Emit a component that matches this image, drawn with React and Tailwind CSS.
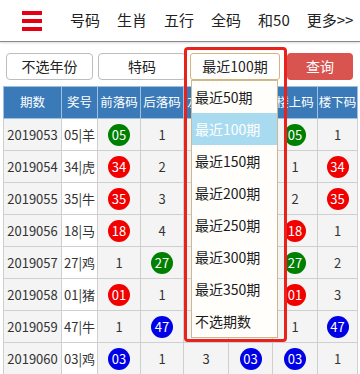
import React from 'react';

const font = { fontFamily: '"Noto Sans CJK SC", "Noto Sans", sans-serif' };

const navItems = ['号码', '生肖', '五行', '全码', '和50', '更多>>'];

const periods = ['最近50期', '最近100期', '最近150期', '最近200期', '最近250期', '最近300期', '最近350期', '不选期数'];

const ballColor = {
    g: 'bg-[#008000]',
    r: 'bg-[#f20000]',
    b: 'bg-[#0000e6]',
};

// each cell: plain text, or [number, colour]
const rows = [
    ['2019053', '05|羊', ['05', 'g'], '1', '2', '1', ['05', 'g'], '1'],
    ['2019054', '34|虎', ['34', 'r'], '2', '1', '3', '1', ['34', 'r']],
    ['2019055', '35|牛', ['35', 'r'], '3', '4', '1', '2', ['35', 'r']],
    ['2019056', '18|马', ['18', 'r'], '4', '2', '1', ['18', 'r'], '1'],
    ['2019057', '27|鸡', '1', ['27', 'g'], '3', '2', ['27', 'g'], '2'],
    ['2019058', '01|猪', ['01', 'r'], '1', '1', '4', ['01', 'r'], '3'],
    ['2019059', '47|牛', '1', ['47', 'b'], '2', '1', '1', ['47', 'b']],
    ['2019060', '03|鸡', ['03', 'b'], '1', '3', ['03', 'b'], ['03', 'b'], '1'],
];

const headers = ['期数', '奖号', '前落码', '后落码', '左落码', '右落码', '楼上码', '楼下码'];
const widths = ['w-[58px]', 'w-[36px]', 'w-[43px]', 'w-[43px]', 'w-[45px]', 'w-[44px]', 'w-[45px]', 'w-[40px]'];

const Ball = ({ n, c }) => (
    <span className={`inline-flex items-center justify-center w-[22px] h-[22px] rounded-full text-white text-[13px] ${ballColor[c]}`}>{n}</span>
);

export default function App() {
    return (
        <div className="relative w-[360px] h-[374px] bg-white overflow-hidden text-[#333]" style={font}>
            {/* top nav */}
            <div className="h-[42px] flex items-center border-b border-[#8a8a8a] shadow-[0_1px_2px_rgba(0,0,0,0.15)]">
                <div className="ml-[22px] w-[20px] flex flex-col gap-[4px]">
                    <span className="h-[4px] bg-[#e60012]" />
                    <span className="h-[4px] bg-[#e60012]" />
                    <span className="h-[4px] bg-[#e60012]" />
                </div>
                <div className="ml-[28px] flex items-center gap-[17px] text-[15px] text-[#222]">
                    {navItems.map((t) => <span key={t}>{t}</span>)}
                </div>
            </div>

            {/* filters */}
            <div className="flex items-center mt-[10px] ml-[6px] h-[28px] text-[14px]">
                <button className="w-[87px] h-[27px] border border-[#bdbdbd] rounded-[4px] bg-white text-[#222]">不选年份</button>
                <button className="ml-[5px] w-[88px] h-[27px] border border-[#bdbdbd] rounded-[4px] bg-white text-[#222]">特码</button>
                <div className="ml-[4px] w-[90px] h-[27px] border-[1.5px] border-[#d2b47c] rounded-[3px] bg-white text-[#222] flex items-center justify-center">最近100期</div>
                <button className="ml-[7px] w-[66px] h-[27px] rounded-[4px] bg-[#d9534f] text-white">查询</button>
            </div>

            {/* table */}
            <table className="ml-[3px] mt-[6px] border-collapse table-fixed text-[13px]">
                <thead>
                    <tr className="h-[32px] bg-[#3a7ab8] text-white">
                        {headers.map((h, i) => (
                            <th key={h} className={`${widths[i]} font-normal text-[12.5px] whitespace-nowrap border border-[#9fc0df] p-0`}>{h}</th>
                        ))}
                    </tr>
                </thead>
                <tbody>
                    {rows.map((r) => (
                        <tr key={r[0]} className="h-[32px]">
                            {r.map((c, i) => (
                                <td key={i} className={`border border-[#cfcfcf] p-0 text-center whitespace-nowrap ${i === 1 ? 'bg-white' : 'bg-[#f4f4f4]'}`}>
                                    {Array.isArray(c) ? <Ball n={c[0]} c={c[1]} /> : c}
                                </td>
                            ))}
                        </tr>
                    ))}
                </tbody>
            </table>

            {/* open select list */}
            <div className="absolute left-[191px] top-[80px] w-[87px] bg-[#fffefb] border border-[#cdb98f] text-[14px] text-[#1a1a1a]">
                {periods.map((p, i) => (
                    <div key={p} className={`h-[32px] flex items-center pl-[3px] ${i === 1 ? 'bg-[#a9dbf0] text-white' : ''}`}>{p}</div>
                ))}
            </div>

            {/* red annotation frame */}
            <div className="absolute left-[184px] top-[47px] w-[103px] h-[295px] border-[3px] border-[#e8231b] rounded-[4px] pointer-events-none" />
        </div>
    );
}
